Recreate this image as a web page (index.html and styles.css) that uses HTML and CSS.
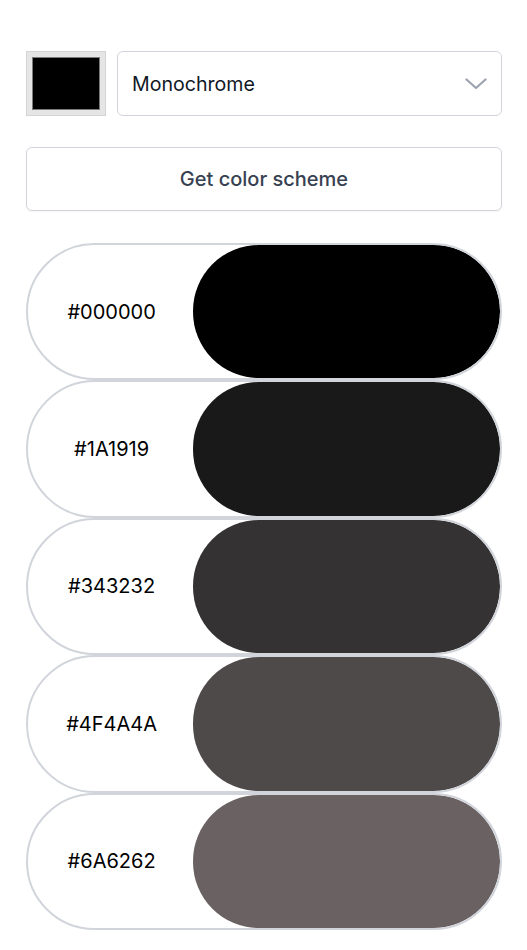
FILE: index.html
```html
<!DOCTYPE html>
<html lang="en">
<head>
<meta charset="utf-8">
<title>Color scheme</title>
<link rel="stylesheet" href="styles.css">
</head>
<body>
<main class="app">
  <div class="controls">
    <div class="picker"><div class="picker-color"></div></div>
    <div class="select">
      <span class="select-label">Monochrome</span>
      <svg class="chevron" width="22" height="12" viewBox="0 0 22 12" fill="none"><path d="M1.5 1.5 L11 10 L20.5 1.5" stroke="#9ca3af" stroke-width="2.2" stroke-linecap="round" stroke-linejoin="round"/></svg>
    </div>
  </div>
  <button class="get-btn">Get color scheme</button>
  <ul class="scheme">
    <li class="card"><span class="hex">#000000</span><span class="swatch" style="background:#000000"></span></li>
    <li class="card"><span class="hex">#1A1919</span><span class="swatch" style="background:#1A1919"></span></li>
    <li class="card"><span class="hex">#343232</span><span class="swatch" style="background:#343232"></span></li>
    <li class="card"><span class="hex">#4F4A4A</span><span class="swatch" style="background:#4F4A4A"></span></li>
    <li class="card"><span class="hex">#6A6262</span><span class="swatch" style="background:#6A6262"></span></li>
  </ul>
</main>
</body>
</html>
```
FILE: styles.css
```css
* { box-sizing: border-box; }
body {
  margin: 0;
  background: #ffffff;
  font-family: Inter, "Noto Sans", sans-serif;
  color: #111827;
}
.app {
  width: 476px;
  margin: 0 0 0 26px;
  padding-top: 51px;
}
.controls {
  display: flex;
  gap: 11px;
  height: 65px;
}
.picker {
  width: 80px;
  height: 65px;
  background: #e5e5e5;
  border: 1px solid #d4d4d4;
  padding: 5px;
}
.picker-color {
  width: 100%;
  height: 100%;
  background: #000;
  border: 1px solid #7a7a7a;
}
.select {
  flex: 1;
  display: flex;
  align-items: center;
  justify-content: space-between;
  border: 1px solid #d1d5db;
  border-radius: 6px;
  padding: 0 14px 0 14px;
  font-size: 19.6px;
  color: #111827;
}
.chevron { display: block; margin-top: 1px; }
.get-btn {
  display: block;
  width: 100%;
  height: 64px;
  margin-top: 31px;
  background: #fff;
  border: 1px solid #d1d5db;
  border-radius: 6px;
  font-family: Inter, "Noto Sans", sans-serif;
  font-size: 20px;
  font-weight: 500;
  color: #374151;
  box-shadow: 0 1px 2px rgba(0,0,0,0.04);
}
.scheme {
  list-style: none;
  margin: 32px 0 0;
  padding: 0;
}
.card {
  display: flex;
  align-items: stretch;
  height: 137.4px;
  border: 2px solid #d1d5db;
  border-radius: 70px;
  overflow: hidden;
  background: #fff;
}
.hex {
  flex: 1;
  display: flex;
  align-items: center;
  justify-content: center;
  font-size: 20px;
  color: #000;
  padding-left: 2px;
}
.swatch {
  width: 65%;
  border-radius: 66px;
}
```
